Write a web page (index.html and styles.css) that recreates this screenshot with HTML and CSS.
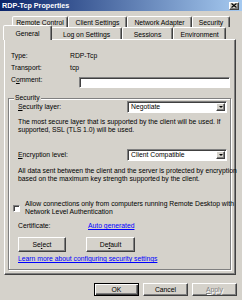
FILE: index.html
```html
<!DOCTYPE html>
<html lang="en">
	<head>
		<meta charset="UTF-8" />
		<title>RDP-Tcp Properties</title>
		<link rel="stylesheet" href="styles.css">
	</head>
	<body>
		<div class="window">
			<div class="titlebar">
				<span class="title">RDP-Tcp Properties</span>
				<button class="close">
					<svg width="6" height="5" viewBox="0 0 6 5">
						<path d="M0.5 0.5 L5.5 4.5 M5.5 0.5 L0.5 4.5" stroke="#000" stroke-width="1.2" />
					</svg>
				</button>
			</div>

			<div class="tabs">
				<div class="tabrow back">
					<div class="tab">Remote Control</div>
					<div class="tab">Client Settings</div>
					<div class="tab">Network Adapter</div>
					<div class="tab">Security</div>
				</div>
				<div class="tabrow front">
					<div class="tab selected">General</div>
					<div class="tab">Log on Settings</div>
					<div class="tab">Sessions</div>
					<div class="tab">Environment</div>
				</div>
			</div>

			<div class="panel">
				<div class="info-row">
					<span class="label">Type:</span>
					<span>RDP-Tcp</span>
				</div>
				<div class="info-row transport">
					<span class="label">Transport:</span>
					<span>tcp</span>
				</div>
				<div class="info-row comment">
					<label class="label">C<u>o</u>mment:</label>
					<input class="textbox" />
				</div>

				<fieldset class="group">
					<legend>Security</legend>

					<div class="field-row first">
						<label class="field-label"><u>S</u>ecurity layer:</label>
						<div class="combo">
							<span class="combo-value">Negotiate</span>
							<span class="combo-btn"><i class="arrow"></i></span>
						</div>
					</div>
					<p class="note">
						The most secure layer that is supported by the client will be used. If<br />
						supported, SSL (TLS 1.0) will be used.
					</p>

					<div class="field-row encryption">
						<label class="field-label"><u>E</u>ncryption level:</label>
						<div class="combo">
							<span class="combo-value">Client Compatible</span>
							<span class="combo-btn"><i class="arrow"></i></span>
						</div>
					</div>
					<p class="note data">
						All data sent between the client and the server is protected by encryption<br />
						based on the maximum key strength supported by the client.
					</p>

					<div class="check-row">
						<span class="checkbox"></span>
						<span>
							Allow connections only from computers running Remote Desktop with<br />
							Network Level Authentication
						</span>
					</div>

					<div class="cert-row">
						<span class="cert-label">Certificate:</span>
						<a class="link" href="#">Auto generated</a>
					</div>

					<div class="cert-buttons">
						<button class="btn select">Se<u>l</u>ect</button>
						<button class="btn">De<u>f</u>ault</button>
					</div>

					<a class="link learn" href="#">Learn more about configuring security settings</a>
				</fieldset>
			</div>

			<div class="actions">
				<button class="btn default">OK</button>
				<button class="btn">Cancel</button>
				<button class="btn disabled"><u>A</u>pply</button>
			</div>
		</div>
	</body>
</html>
```

FILE: styles.css
```css
* {
	box-sizing: border-box;
}
html,
body {
	margin: 0;
}
body {
	width: 242px;
	height: 300px;
	overflow: hidden;
	background-color: #d5d2cb;
	font-family: "Liberation Sans", Arial, sans-serif;
	font-size: 6.8px;
	line-height: 8px;
	color: #000;
}
u {
	text-decoration-thickness: 1px;
	text-underline-offset: 1px;
}

/* title bar */
.titlebar {
	height: 11px;
	display: flex;
	align-items: center;
	justify-content: space-between;
	padding: 0 3px 0 2px;
	background: linear-gradient(to right, #0a246a, #a6caf0);
}
.title {
	color: #fff;
	font-weight: bold;
	font-size: 7.2px;
}
.close {
	width: 10px;
	height: 8px;
	padding: 0;
	display: flex;
	align-items: center;
	justify-content: center;
	background-color: #d5d2cb;
	border: 1px solid;
	border-color: #fff #404040 #404040 #fff;
	box-shadow: inset -1px -1px #808080;
}

/* tabs */
.tabs {
	padding-top: 5px;
}
.tabrow {
	display: flex;
	height: 11px;
}
.tabrow.back {
	padding-left: 12px;
}
.tabrow.front {
	height: 12px;
	padding-left: 4px;
}
.tab {
	height: 100%;
	padding-top: 2px;
	text-align: center;
	white-space: nowrap;
	background-color: #d5d2cb;
	border: 1px solid;
	border-bottom: none;
	border-color: #fff #404040 transparent #fff;
	border-radius: 2px 2px 0 0;
	box-shadow: inset -1px 0 #808080;
}
.back .tab:nth-child(1) { width: 56px; }
.back .tab:nth-child(2) { width: 59px; }
.back .tab:nth-child(3) { width: 65px; }
.back .tab:nth-child(4) { width: 38px; }
.front .tab {
	padding-top: 3px;
}
.front .tab:nth-child(1) { width: 49px; }
.front .tab:nth-child(2) { width: 71px; }
.front .tab:nth-child(3) { width: 51px; }
.front .tab:nth-child(4) { width: 53px; }
.tab.selected {
	position: relative;
	z-index: 1;
	height: 15px;
	margin-top: -2px;
	margin-left: -1px;
	margin-right: -1px;
	width: 51px;
	padding-top: 4px;
}

/* page */
.panel {
	width: 232px;
	height: 236px;
	margin-left: 4px;
	padding: 12px 4px 0 3px;
	border: 1px solid;
	border-color: #fff #404040 #404040 #fff;
	box-shadow: inset -1px -1px #808080;
}
.info-row {
	display: flex;
	padding-left: 3px;
	height: 8px;
}
.info-row .label {
	width: 59px;
	flex-shrink: 0;
}
.info-row.transport {
	margin-top: 4px;
}
.info-row.comment {
	margin-top: 4px;
	height: 12px;
}
.info-row.comment .label {
	width: 68px;
}
.textbox {
	width: 151px;
	min-width: 0;
	height: 11px;
	margin: 1px 0 0;
	padding: 0;
	background-color: #fff;
	border: 1px solid;
	border-color: #808080 #fff #fff #808080;
	box-shadow: inset 1px 1px #404040;
}

/* security group */
.group {
	margin: 6px 0 0;
	padding: 0 3px 6px 4px;
	min-inline-size: 0;
	border: 1px solid #808080;
	box-shadow: inset 1px 1px 0 #fff, 1px 1px 0 #fff;
}
.group legend {
	margin-left: 1px;
	padding: 0 1px;
	line-height: 8px;
	background-color: #d5d2cb;
}
.field-row {
	display: flex;
	align-items: center;
	padding-left: 5px;
	height: 12px;
}
.field-row.first {
	margin-top: -1px;
}
.field-row.encryption {
	margin-top: 15px;
}
.field-label {
	width: 109px;
}
.combo {
	width: 100px;
	height: 12px;
	display: flex;
	align-items: center;
	background-color: #fff;
	border: 1px solid;
	border-color: #808080 #fff #fff #808080;
	box-shadow: inset 1px 1px #404040;
}
.combo-value {
	flex: 1;
	padding-left: 3px;
}
.combo-btn {
	width: 9px;
	height: 8px;
	margin-right: 1px;
	display: flex;
	align-items: center;
	justify-content: center;
	background-color: #d5d2cb;
	border: 1px solid;
	border-color: #fff #404040 #404040 #fff;
	box-shadow: inset -1px -1px #808080;
}
.arrow {
	width: 0;
	height: 0;
	border-left: 2px solid transparent;
	border-right: 2px solid transparent;
	border-top: 2px solid #000;
}
.note {
	margin: 5px 0 0;
	padding-left: 5px;
	white-space: nowrap;
}
.note.data {
	margin-top: 6px;
}
.check-row {
	display: flex;
	align-items: center;
	gap: 5px;
	margin-top: 17px;
	white-space: nowrap;
}
.checkbox {
	width: 7px;
	height: 7px;
	flex-shrink: 0;
	background-color: #fff;
	border: 1px solid;
	border-color: #808080 #fff #fff #808080;
	box-shadow: inset 1px 1px #404040;
}
.cert-row {
	display: flex;
	margin-top: 6px;
	padding-left: 5px;
}
.cert-label {
	width: 70px;
}
.link {
	color: #0000ff;
	text-decoration: underline;
}
.cert-buttons {
	display: flex;
	gap: 20px;
	margin-top: 7px;
	padding-left: 5px;
}
.cert-buttons .btn {
	width: 49px;
	height: 15px;
}
.cert-buttons .btn.select {
	width: 48px;
}
.learn {
	display: block;
	margin-top: 3px;
	margin-left: 5px;
	width: fit-content;
}

/* buttons */
.btn {
	padding: 0;
	font: inherit;
	color: #000;
	background-color: #d5d2cb;
	border: 1px solid;
	border-color: #fff #404040 #404040 #fff;
	box-shadow: inset -1px -1px #808080;
}
.btn.default {
	border-color: #000;
	box-shadow: inset 1px 1px #fff, inset -1px -1px #404040, inset -2px -2px #808080;
}
.btn.disabled {
	color: #808080;
	text-shadow: 1px 1px 0 #fff;
}
.actions {
	display: flex;
	justify-content: flex-end;
	gap: 4px;
	margin-top: 8px;
	padding-right: 5px;
}
.actions .btn {
	width: 45px;
	height: 13px;
}
```
